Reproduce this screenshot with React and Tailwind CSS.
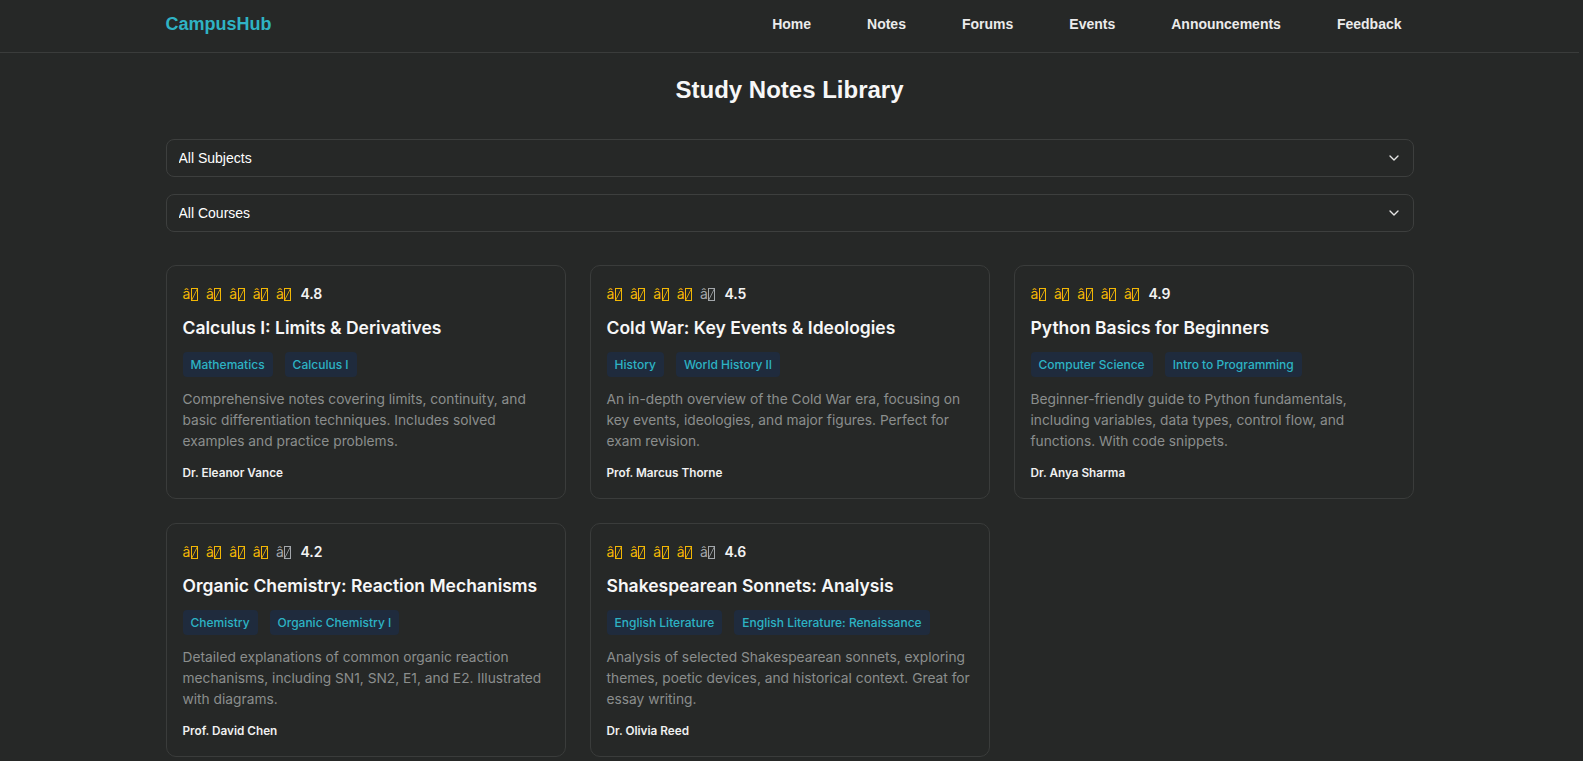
import React from 'react';
import { ChevronDown } from 'lucide-react';

const links = ['Home', 'Notes', 'Forums', 'Events', 'Announcements', 'Feedback'];

const notes = [
  {
    rating: 4.8,
    filled: 5,
    title: 'Calculus I: Limits & Derivatives',
    tags: ['Mathematics', 'Calculus I'],
    desc: 'Comprehensive notes covering limits, continuity, and basic differentiation techniques. Includes solved examples and practice problems.',
    author: 'Dr. Eleanor Vance',
  },
  {
    rating: 4.5,
    filled: 4,
    title: 'Cold War: Key Events & Ideologies',
    tags: ['History', 'World History II'],
    desc: 'An in-depth overview of the Cold War era, focusing on key events, ideologies, and major figures. Perfect for exam revision.',
    author: 'Prof. Marcus Thorne',
  },
  {
    rating: 4.9,
    filled: 5,
    title: 'Python Basics for Beginners',
    tags: ['Computer Science', 'Intro to Programming'],
    desc: 'Beginner-friendly guide to Python fundamentals, including variables, data types, control flow, and functions. With code snippets.',
    author: 'Dr. Anya Sharma',
  },
  {
    rating: 4.2,
    filled: 4,
    title: 'Organic Chemistry: Reaction Mechanisms',
    tags: ['Chemistry', 'Organic Chemistry I'],
    desc: 'Detailed explanations of common organic reaction mechanisms, including SN1, SN2, E1, and E2. Illustrated with diagrams.',
    author: 'Prof. David Chen',
  },
  {
    rating: 4.6,
    filled: 4,
    title: 'Shakespearean Sonnets: Analysis',
    tags: ['English Literature', 'English Literature: Renaissance'],
    desc: 'Analysis of selected Shakespearean sonnets, exploring themes, poetic devices, and historical context. Great for essay writing.',
    author: 'Dr. Olivia Reed',
  },
];

// the star emoji came through badly encoded: "â" plus a missing-glyph box
function Star({ on }) {
  return (
    <span className={`flex items-center ${on ? 'text-[#f2b705]' : 'text-[#a3a7ab]'}`}>
      <span className="text-[14px] leading-none">â</span>
      <svg width="7" height="13" viewBox="0 0 7 13" className="ml-[0.5px]">
        <rect x="0.5" y="0.5" width="6" height="12" fill="none" stroke="currentColor" strokeWidth="1" />
        <line x1="0.5" y1="12.5" x2="6.5" y2="0.5" stroke="currentColor" strokeWidth="0.8" />
      </svg>
    </span>
  );
}

function Select({ label }) {
  return (
    <div className="relative">
      <select className="w-full appearance-none rounded-lg border border-[#3d3f3e] bg-[#262827] px-3 py-2 text-sm leading-5 text-white outline-none">
        <option>{label}</option>
      </select>
      <ChevronDown size={16} strokeWidth={2} className="pointer-events-none absolute right-3 top-1/2 -translate-y-1/2 text-[#e5e5e5]" />
    </div>
  );
}

function NoteCard({ note }) {
  return (
    <div className="flex flex-col rounded-[10px] border border-[#3a3c3b] bg-[#262827] p-4 font-['Inter',sans-serif]">
      <div className="mb-2 flex h-6 items-center">
        <div className="flex items-center gap-2">
          {[0, 1, 2, 3, 4].map((i) => (
            <Star key={i} on={i < note.filled} />
          ))}
        </div>
        <span className="ml-[9px] text-sm font-semibold text-[#f3f3f3]">{note.rating}</span>
      </div>
      <h3 className="mb-2.5 text-[17.5px] font-semibold leading-7 text-[#f7f7f7]">{note.title}</h3>
      <div className="mb-3 flex gap-3">
        {note.tags.map((t) => (
          <span key={t} className="rounded-[4px] bg-[#1f2b3d] px-2 py-1 text-xs font-medium leading-[17px] text-[#2db3c4]">
            {t}
          </span>
        ))}
      </div>
      <p className="mb-3 text-[13.75px] leading-[21px] text-[#8b8e8d]">{note.desc}</p>
      <p className="text-[11.75px] font-semibold leading-[18px] text-[#f0f0f0]">{note.author}</p>
    </div>
  );
}

export default function App() {
  return (
    <div className="min-h-screen bg-[#262827] pr-1 font-['Liberation_Sans',Arial,sans-serif] text-white">
      <header className="border-b border-[#3a3c3b]">
        <div className="mx-auto flex h-[52px] max-w-7xl items-center px-4 pb-1">
          <span className="text-lg font-bold text-[#2fb3c4]">CampusHub</span>
          <nav className="ml-auto flex gap-8">
            {links.map((l) => (
              <a key={l} className="px-3 text-sm font-semibold text-[#ebebeb]">
                {l}
              </a>
            ))}
          </nav>
        </div>
      </header>

      <main className="mx-auto max-w-7xl px-4 pb-8 pt-[21px]">
        <h1 className="mb-[33px] text-center text-2xl font-bold text-[#f7f7f7]">Study Notes Library</h1>

        <div className="mb-[33px] flex flex-col gap-[17px]">
          <Select label="All Subjects" />
          <Select label="All Courses" />
        </div>

        <div className="grid grid-cols-3 gap-6">
          {notes.map((n) => (
            <NoteCard key={n.title} note={n} />
          ))}
        </div>
      </main>
    </div>
  );
}
